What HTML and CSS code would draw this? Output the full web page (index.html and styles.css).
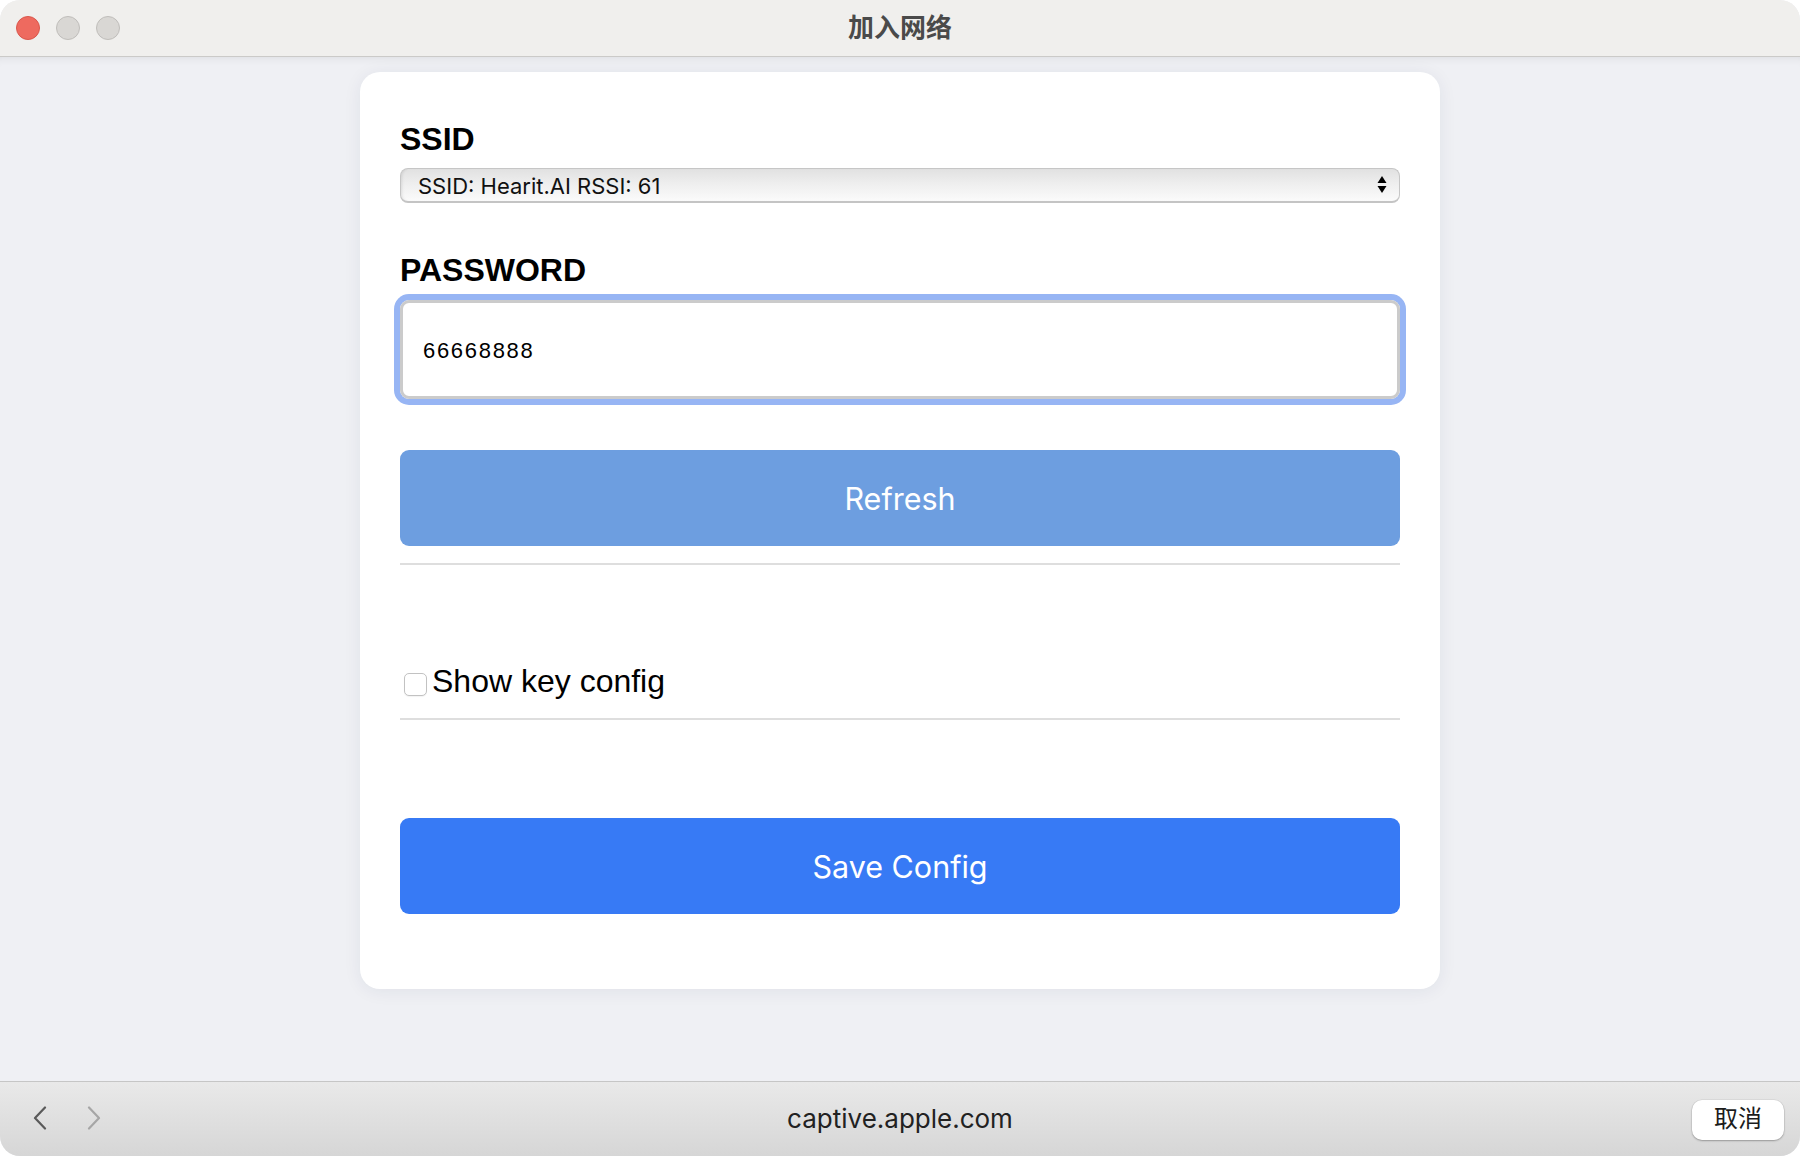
FILE: index.html
```html
<!DOCTYPE html>
<html lang="zh">
<head>
<meta charset="utf-8">
<title>加入网络</title>
<link rel="stylesheet" href="styles.css">
</head>
<body>
<div class="window">
  <header class="titlebar">
    <div class="lights">
      <span class="light red"></span>
      <span class="light gray"></span>
      <span class="light gray"></span>
    </div>
    <div class="title">加入网络</div>
    <div></div>
  </header>
  <main class="content">
    <form class="card">
      <label class="field-label">SSID</label>
      <div class="select">
        <span class="select-text">SSID: Hearit.AI RSSI: 61</span>
        <svg class="select-arrows" width="10" height="20" viewBox="0 0 10 20"><path d="M5 1 L9.5 8 L0.5 8 Z" fill="#000"/><path d="M0.5 11 L9.5 11 L5 18 Z" fill="#000"/></svg>
      </div>
      <label class="field-label pw-label">PASSWORD</label>
      <div class="input">66668888</div>
      <button type="button" class="btn btn-refresh">Refresh</button>
      <hr class="divider first">
      <label class="check-row"><span class="checkbox"></span>Show key config</label>
      <hr class="divider second">
      <button type="button" class="btn btn-save">Save Config</button>
    </form>
  </main>
  <footer class="bottombar">
    <div class="nav">
      <svg class="chev" width="16" height="24" viewBox="0 0 16 24"><path d="M13 1.5 L3 12 L13 22.5" fill="none" stroke="#5a5a5a" stroke-width="2.2" stroke-linecap="round" stroke-linejoin="round"/></svg>
      <svg class="chev fwd" width="16" height="24" viewBox="0 0 16 24"><path d="M3 1.5 L13 12 L3 22.5" fill="none" stroke="#a6a6a6" stroke-width="2.2" stroke-linecap="round" stroke-linejoin="round"/></svg>
    </div>
    <div class="url">captive.apple.com</div>
    <div class="right"><button type="button" class="cancel">取消</button></div>
  </footer>
</div>
</body>
</html>
```

FILE: styles.css
```css
* { box-sizing: border-box; }
html, body { margin: 0; padding: 0; background: #ffffff; }
body { width: 1800px; height: 1156px; overflow: hidden; }

.window {
  width: 1800px;
  height: 1156px;
  display: flex;
  flex-direction: column;
  border-radius: 20px;
  overflow: hidden;
  background: #eff0f4;
}

.titlebar {
  height: 57px;
  flex: none;
  display: grid;
  grid-template-columns: 1fr auto 1fr;
  align-items: center;
  background: #f0efed;
  border-bottom: 1px solid #cbcac8;
}
.lights { display: flex; gap: 16px; padding-left: 16px; }
.light {
  width: 24px; height: 24px; border-radius: 50%;
  display: block;
}
.light.red { background: #ee6a5f; border: 1px solid #d9574c; }
.light.gray { background: #d9d7d4; border: 1px solid #bfbdba; }
.title {
  font-family: "Noto Sans CJK SC", "Noto Sans", sans-serif;
  font-size: 26px;
  font-weight: 700;
  color: #4a4a4a;
  line-height: 52px;
  padding-bottom: 4px;
}

.content {
  flex: 1;
  display: flex;
  justify-content: center;
  align-items: flex-start;
  box-shadow: inset 0 8px 10px -8px rgba(0,0,0,0.10);
}

.card {
  margin-top: 15px;
  width: 1080px;
  background: #ffffff;
  border-radius: 20px;
  padding: 49px 40px 75px;
  display: flex;
  flex-direction: column;
  box-shadow: 0 2px 18px rgba(30,40,80,0.07);
}

.field-label {
  font-family: "Liberation Sans", Arial, sans-serif;
  font-weight: 700;
  font-size: 32px;
  line-height: 37px;
  color: #000;
}
.pw-label { margin-top: 49px; }

.select {
  margin-top: 10px;
  height: 35px;
  border: 1px solid #c6c6c6;
  border-bottom: 2px solid #c4c4c4;
  border-radius: 8px;
  background: linear-gradient(#e1e1e1, #eeeeee 45%, #fbfbfb);
  box-shadow: inset 3px 0 3px -2px rgba(0,0,0,0.10);
  display: flex;
  align-items: center;
  justify-content: space-between;
  padding: 0 12px 0 17px;
}
.select-text {
  font-family: Inter, "Liberation Sans", sans-serif;
  font-size: 22px;
  color: #111;
  padding-top: 1px;
}

.input {
  margin-top: 11px;
  height: 99px;
  border: 3px solid #cbcbcb;
  border-radius: 9px;
  box-shadow: 0 0 0 6px #97b5f4;
  display: flex;
  align-items: center;
  padding-left: 20px;
  padding-top: 2px;
  font-family: "Liberation Sans", Arial, sans-serif;
  font-size: 22px;
  letter-spacing: 1.7px;
  color: #000;
}

.btn {
  border: none;
  border-radius: 9px;
  height: 96px;
  width: 100%;
  color: #fff;
  font-family: Inter, "Liberation Sans", sans-serif;
  font-size: 30.5px;
  font-weight: 400;
  padding: 0;
}
.btn-refresh { margin-top: 51px; background: #6d9ee0; }
.btn-save { margin-top: 98px; background: #377af5; }

.divider {
  border: none;
  height: 2px;
  background: #dedede;
  margin: 0;
}
.divider.first { margin-top: 17px; }
.divider.second { margin-top: 19px; }

.check-row {
  margin-top: 98px;
  display: flex;
  align-items: center;
  font-family: "Liberation Sans", Arial, sans-serif;
  font-size: 32px;
  line-height: 36px;
  color: #000;
}
.checkbox {
  width: 23px; height: 23px;
  margin: 6px 5px 0 4px;
  border: 1px solid #c2c2c2;
  border-radius: 5px;
  background: #fff;
  box-shadow: 0 1px 1px rgba(0,0,0,0.05);
  flex: none;
}

.bottombar {
  height: 75px;
  flex: none;
  border-top: 1px solid #c6c6c6;
  background: linear-gradient(#e9e9e9, #d6d6d6);
  display: grid;
  grid-template-columns: 1fr auto 1fr;
  align-items: center;
}
.nav { display: flex; gap: 38px; padding-left: 32px; padding-bottom: 2px; }
.chev { display: block; }
.url {
  font-family: Inter, "Liberation Sans", sans-serif;
  font-size: 26px;
  color: #222;
  padding-bottom: 1px;
}
.right { display: flex; justify-content: flex-end; padding-right: 16px; }
.cancel {
  width: 92px; height: 40px;
  border: none;
  border-radius: 10px;
  background: #fff;
  box-shadow: 0 1px 2px rgba(0,0,0,0.28), 0 0 0 0.5px rgba(0,0,0,0.08);
  font-family: "Noto Sans CJK SC", "Noto Sans", sans-serif;
  font-size: 24px;
  line-height: 32px;
  color: #1c1c1c;
  padding: 0 0 6px;
  margin-top: 2px;
}
```
